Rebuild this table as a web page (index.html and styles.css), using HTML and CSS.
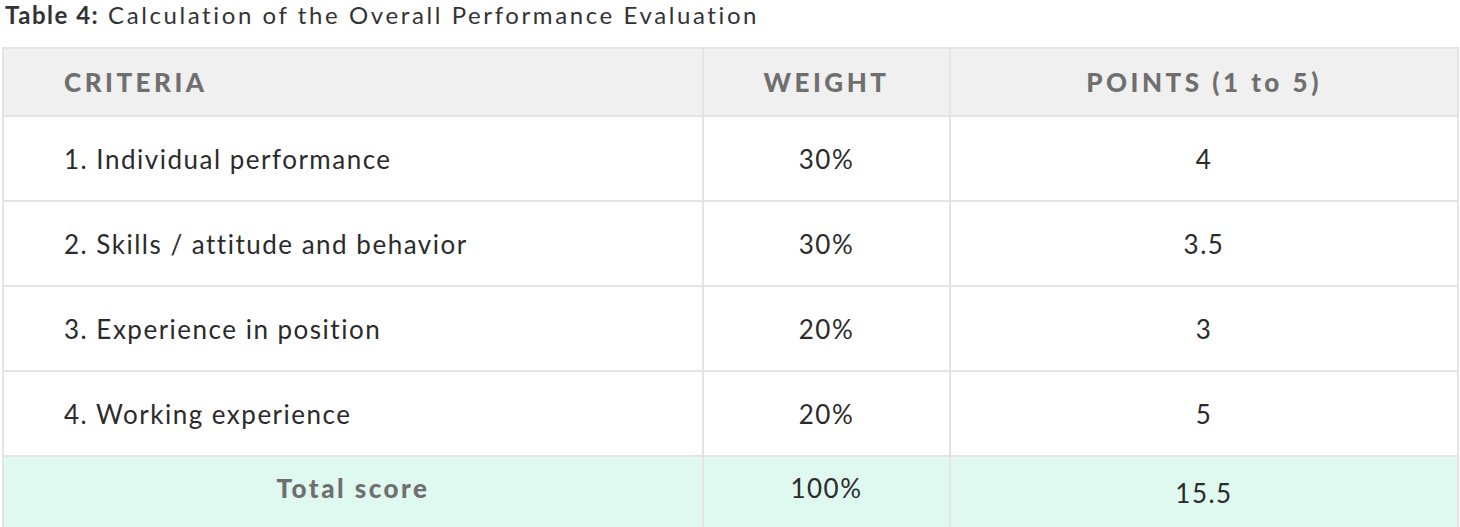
FILE: index.html
```html
<!DOCTYPE html>
<html>
<head>
<meta charset="utf-8">
<link rel="stylesheet" href="styles.css">
</head>
<body>
<p class="caption"><strong>Table 4:</strong> Calculation of the Overall Performance Evaluation</p>
<table class="eval">
  <thead>
    <tr>
      <th class="c1">CRITERIA</th>
      <th class="c2">WEIGHT</th>
      <th class="c3">POINTS (1 to 5)</th>
    </tr>
  </thead>
  <tbody>
    <tr><td class="c1">1. Individual performance</td><td class="c2">30%</td><td class="c3">4</td></tr>
    <tr><td class="c1">2. Skills / attitude and behavior</td><td class="c2">30%</td><td class="c3">3.5</td></tr>
    <tr><td class="c1">3. Experience in position</td><td class="c2">20%</td><td class="c3">3</td></tr>
    <tr><td class="c1">4. Working experience</td><td class="c2">20%</td><td class="c3">5</td></tr>
    <tr class="total"><td class="c1 label">Total score</td><td class="c2">100%</td><td class="c3 pts">15.5</td></tr>
  </tbody>
</table>
</body>
</html>
```
FILE: styles.css
```css
html, body {
  margin: 0;
  padding: 0;
  background: #ffffff;
}
body {
  font-family: "Lato", "Open Sans", sans-serif;
  color: #2b2b2b;
}
.caption {
  margin: 0 0 17px 5px;
  font-size: 24px;
  line-height: 30px;
  letter-spacing: 2.6px;
  color: #333333;
}
.caption strong {
  font-weight: 700;
  letter-spacing: 1.5px;
}
.eval {
  margin-left: 2px;
  width: 1457px;
  border-collapse: collapse;
  table-layout: fixed;
}
.eval th, .eval td {
  border: 2px solid #e4e4e4;
  font-size: 26px;
}
.eval th {
  background: #f0f0f0;
  color: #6f6f6f;
  font-weight: 900;
  letter-spacing: 3.5px;
  height: 66px;
  padding: 0;
}
.eval td {
  height: 83px;
  padding: 0;
  color: #2b2b2b;
  letter-spacing: 1.5px;
}
.eval .c1 { width: 638px; text-align: left; padding-left: 60px; }
.eval .c2 { width: 245px; text-align: center; }
.eval .c3 { text-align: center; }
.eval .total td {
  background: #dff8f0;
  height: 62px;
  padding-bottom: 8px;
  border-bottom: none;
}
.eval .total .label {
  text-align: center;
  padding-left: 0;
  color: #6f6f6f;
  font-weight: 900;
  letter-spacing: 2.5px;
}
.eval .total .pts {
  padding-top: 2px;
  padding-bottom: 0;
}
```
